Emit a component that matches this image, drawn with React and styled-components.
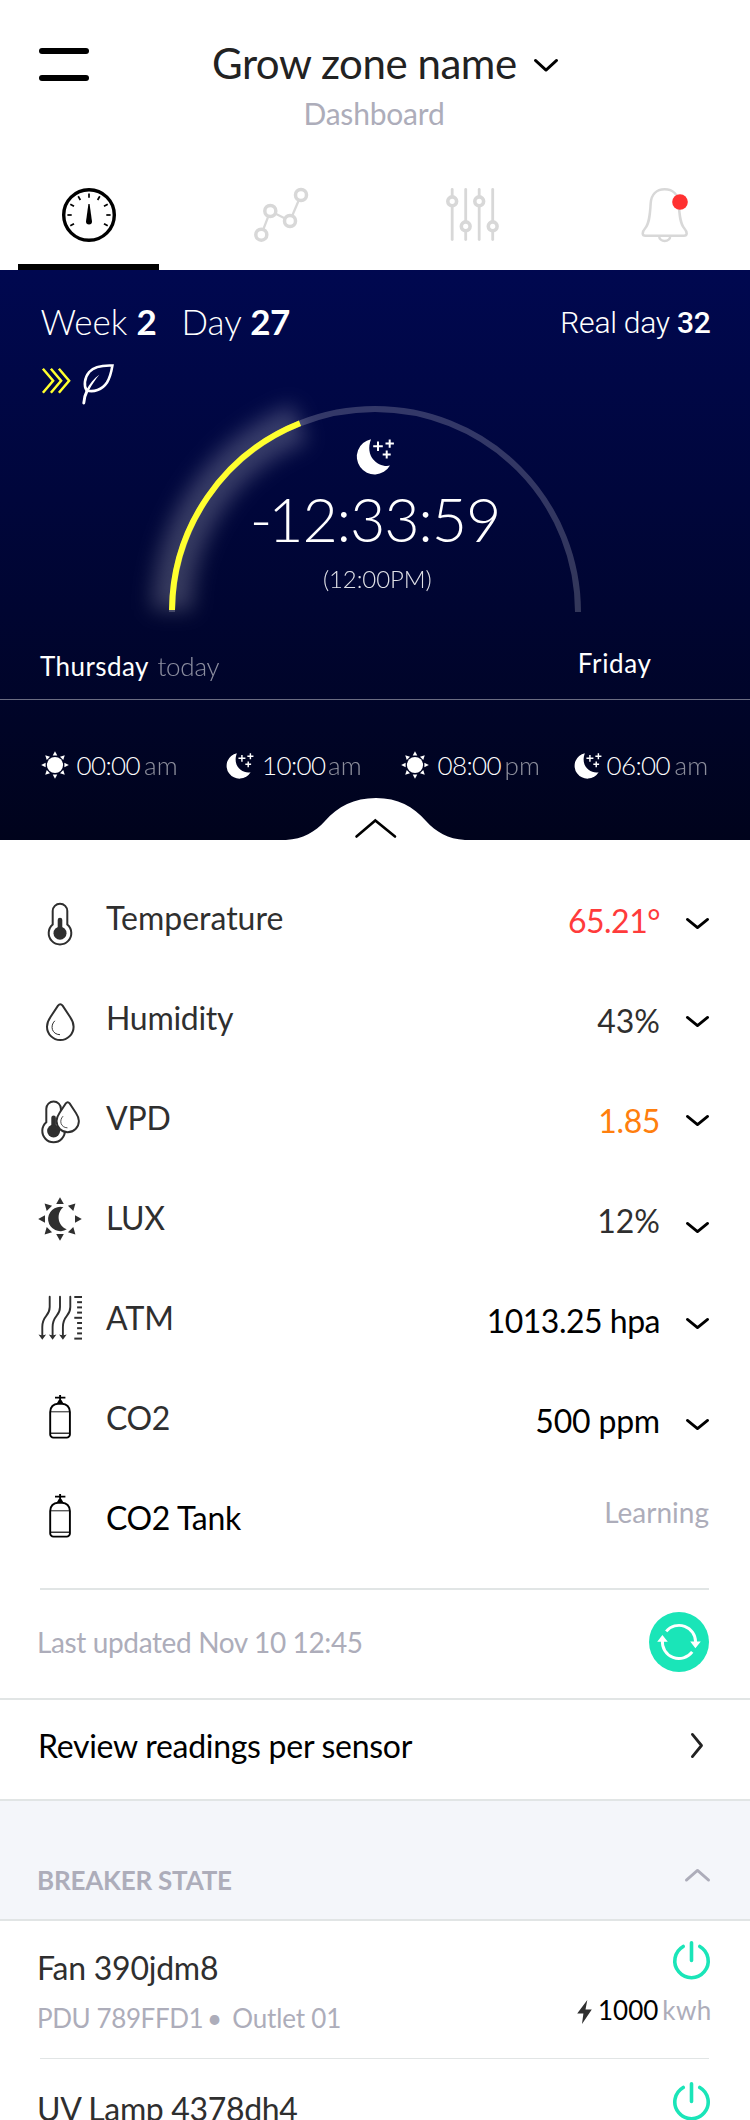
import React from 'react';
import styled, { createGlobalStyle } from 'styled-components';

const GlobalStyle = createGlobalStyle`
  *, *::before, *::after { box-sizing: border-box; }
  body { margin: 0; background: #fff; font-family: Lato, "Liberation Sans", sans-serif; }
  svg { display: block; flex: none; overflow: visible; }
`;

const ink = '#2f2f2f';
const muted = '#adadba';
const teal = '#1ae5b8';
const rule = '#e1e5e5';

/* ---------- Layout ---------- */

const Screen = styled.div`
  width: 750px;
  height: 2120px;
  overflow: hidden;
  background: #fff;
`;

const Header = styled.header`
  display: grid;
  grid-template-columns: 173px 346px;
  height: 188px;
  padding-left: 39px;
`;

const MenuButton = styled.button`
  display: flex;
  flex-direction: column;
  gap: 21px;
  width: 50px;
  margin: 48px 0 0;
  padding: 0;
  border: 0;
  background: none;
  align-self: start;
  &::before, &::after {
    content: '';
    height: 6px;
    border-radius: 3px;
    background: #000;
  }
`;

const Titles = styled.div`
  padding-top: 38px;
`;

const TitleRow = styled.div`
  display: flex;
  align-items: center;
  justify-content: space-between;
  height: 50px;
  svg { margin-top: 4px; }
`;

const Title = styled.h1`
  margin: 0;
  font-size: 42px;
  font-weight: 400;
  line-height: 50px;
  letter-spacing: -0.45px;
  color: #222;
  white-space: nowrap;
`;

const Subtitle = styled.div`
  margin: 7px 22px 0 0;
  text-align: center;
  font-size: 30px;
  line-height: 36px;
  letter-spacing: -0.2px;
  color: ${muted};
`;

const Tabs = styled.nav`
  display: flex;
  gap: 51px;
  height: 82px;
  padding-left: 18px;
`;

const Tab = styled.div`
  display: flex;
  justify-content: center;
  width: 141px;
  border-bottom: 6px solid ${(p) => (p.$active ? '#000' : 'transparent')};
`;

const Hero = styled.section`
  position: relative;
  display: flex;
  flex-direction: column;
  height: 570px;
  padding-top: 30px;
  color: #fff;
  background: linear-gradient(#000850 0%, #00031c 100%);
`;

const HeroTop = styled.div`
  display: flex;
  align-items: flex-start;
  height: 42px;
  padding: 0 39.5px 0 40.5px;
  font-size: 35px;
  line-height: 42px;
  font-weight: 300;
  white-space: pre;
`;

const Counter = styled.span`
  margin-right: ${(p) => p.$gap}px;
  b { font-weight: 700; margin-left: ${(p) => p.$inner}px; letter-spacing: -0.4px; }
`;

const RealDay = styled.span`
  margin-left: auto;
  padding-top: 2px;
  font-family: Roboto, sans-serif;
  font-size: 30px;
  letter-spacing: -0.25px;
  b { font-weight: 500; }
`;

const StageIcons = styled.div`
  display: flex;
  gap: 11px;
  height: 42px;
  margin-top: 21px;
  padding-left: 42px;
  svg:first-child { margin-top: 5px; }
`;

const Dial = styled.div`
  display: grid;
  justify-items: center;
  height: 208px;
  > * { grid-area: 1 / 1; }
`;

const DialContent = styled.div`
  display: flex;
  flex-direction: column;
  align-items: center;
  padding-top: 34px;
  z-index: 1;
`;

const Clock = styled.div`
  margin-top: 8px;
  font-size: 61px;
  line-height: 72px;
  font-weight: 300;
  letter-spacing: -1.2px;
  span { margin-right: -3px; }
`;

const ClockNote = styled.div`
  margin: 9px 0 0 4.5px;
  font-size: 24px;
  line-height: 30px;
  font-weight: 300;
  letter-spacing: -0.1px;
  opacity: 0.88;
`;

const Days = styled.div`
  display: flex;
  height: 53px;
  margin-top: 34px;
  padding-left: 40px;
  border-bottom: 1px solid rgba(255, 255, 255, 0.42);
  font-size: 26px;
  line-height: 32px;
`;

const Today = styled.div`
  width: 537.8px;
  padding-top: 3px;
  letter-spacing: 0.45px;
  span { margin-left: 8.5px; font-weight: 300; letter-spacing: -0.25px; opacity: 0.55; }
`;

const NextDay = styled.div`
  letter-spacing: 0.65px;
`;

const Schedule = styled.div`
  display: grid;
  grid-template-columns: 184.5px 175.2px 173.3px 1fr;
  padding: 49px 0 0 41px;
`;

const Slot = styled.div`
  display: flex;
  gap: ${(p) => p.$gap}px;
  height: 32px;
  font-size: 26px;
  line-height: 32px;
  font-weight: 300;
  svg { margin-top: ${(p) => (p.$moon ? 4 : 2)}px; }
`;

const SlotTime = styled.span`
  letter-spacing: -0.6px;
  span { margin-left: ${(p) => p.$gap}px; letter-spacing: 0; opacity: 0.55; }
`;

const Handle = styled.button`
  position: absolute;
  left: 286px;
  bottom: 0;
  padding: 0;
  border: 0;
  background: none;
`;

const Readings = styled.section`
  padding: 28px 41px 20px 36px;
`;

const Reading = styled.div`
  display: flex;
  height: 100px;
  font-size: 32px;
  line-height: 100px;
`;

const ReadingIcon = styled.span`
  width: 70px;
  padding-top: ${(p) => p.$top}px;
`;

const ReadingName = styled.span`
  flex: 1;
  color: ${(p) => p.$color || ink};
  letter-spacing: ${(p) => p.$track || 0}px;
`;

const ReadingValue = styled.span`
  margin-top: 3px;
  color: ${(p) => p.$color || ink};
  letter-spacing: ${(p) => p.$track || 0}px;
`;

const ReadingStatus = styled.span`
  margin-top: -6px;
  font-size: 28px;
  color: ${muted};
`;

const Expand = styled.span`
  width: 49px;
  padding: ${(p) => p.$top}px 0 0 26px;
`;

const Divider = styled.hr`
  height: ${(p) => p.$size}px;
  margin: 0 41.5px 0 40px;
  border: 0;
  background: ${rule};
`;

const Bar = styled.div`
  display: flex;
  align-items: center;
  justify-content: space-between;
  height: ${(p) => p.$height}px;
  padding: ${(p) => p.$pad};
  border-bottom: 2px solid ${rule};
  background: ${(p) => p.$bg || '#fff'};
`;

const Updated = styled.span`
  font-size: 28px;
  letter-spacing: -0.37px;
  color: ${muted};
`;

const LinkText = styled.span`
  font-size: 32px;
  letter-spacing: -0.28px;
  color: #000;
`;

const SectionTitle = styled.h2`
  margin: 0;
  font-size: 26px;
  font-weight: 700;
  letter-spacing: -0.2px;
  color: ${muted};
`;

const CollapseIcon = styled.span`
  margin-bottom: 9px;
`;

const Breaker = styled.div`
  display: flex;
  justify-content: space-between;
  height: 137px;
  padding: ${(p) => (p.$first ? 20 : 22.5)}px 38px 0 37px;
`;

const BreakerInfo = styled.div`
  padding-top: 7px;
`;

const BreakerName = styled.div`
  font-size: 32px;
  line-height: 40px;
  letter-spacing: ${(p) => p.$track}px;
  color: ${ink};
`;

const BreakerMeta = styled.div`
  margin-top: 14px;
  font-size: 26px;
  line-height: 32px;
  letter-spacing: -0.4px;
  color: ${muted};
  white-space: pre;
  span { margin: 0 -2px 0 -2.5px; }
  em { font-style: normal; letter-spacing: -0.15px; }
`;

const BreakerSide = styled.div`
  display: flex;
  flex-direction: column;
  width: 134.5px;
  > svg { align-self: flex-end; margin-right: 2px; }
`;

const Power = styled.div`
  display: flex;
  margin-top: 15px;
  font-size: 26px;
  line-height: 32px;
  color: #000;
  svg { margin: 6px 6px 0 -0.5px; }
  span { margin-left: 4px; color: ${muted}; letter-spacing: 0.4px; }
`;

/* ---------- Icons ---------- */

const Chevron = ({ w = 23, h = 11.2, color = '#000', up }) => (
  <svg width={w} height={h} fill="none" stroke={color} strokeWidth="2.8" strokeLinecap="round" strokeLinejoin="round">
    <path d={up ? `M1.4 ${h - 1.4}L${w / 2} 1.4L${w - 1.4} ${h - 1.4}` : `M1.4 1.4L${w / 2} ${h - 1.6}L${w - 1.4} 1.4`} />
  </svg>
);

const GaugeIcon = () => (
  <svg width="54" height="54" viewBox="-27 -27 54 54">
    <circle r="25.3" fill="none" stroke="#000" strokeWidth="3.4" />
    {[-120, -90, -60, -30, 0, 30, 60, 90, 120].map((a) => (
      <path key={a} d="M0-21.6V-17.3" stroke="#000" strokeWidth="1.7" transform={`rotate(${a})`} />
    ))}
    <path d="M-.6-11H.6L3 6.6A3 3 0 0 1-3 6.6Z" />
  </svg>
);

const nodes = [[7.3, 46.7], [16.3, 23], [36, 33], [47, 7]];
const NodesIcon = () => (
  <svg width="54" height="54" stroke="#d8d8d8">
    <path d="M7.3 46.7L16.3 23L36 33L47 7" fill="none" strokeWidth="2.3" />
    {nodes.map(([x, y]) => <circle key={x} cx={x} cy={y} r="5.5" fill="#fff" strokeWidth="3.5" />)}
  </svg>
);

const knobs = [[6.2, 13.3], [19.7, 38.3], [33.2, 13.3], [46.7, 38.3]];
const SlidersIcon = () => (
  <svg width="53" height="54" stroke="#d8d8d8">
    {knobs.map(([x, y]) => (
      <g key={x}>
        <path d={`M${x} 1.4V51.6`} strokeWidth="2.8" strokeLinecap="round" />
        <circle cx={x} cy={y} r="4.4" fill="#fff" strokeWidth="3.6" />
      </g>
    ))}
  </svg>
);

const BellIcon = () => (
  <svg width="47" height="54">
    <g fill="none" stroke="#d8d8d8" strokeWidth="2.5">
      <path d="M23.7 1.3C15 1.3 10.4 7 9.7 15C9 28 8 36 4 40.5C.9 44 .8 47.8 4.5 47.8H42.8C46.6 47.8 46.5 44 43.4 40.5C39.4 36 38.4 28 37.7 15C37 7 32.4 1.3 23.7 1.3Z" />
      <path d="M18.2 48.3A5.5 4.6 0 0 0 29.2 48.3" />
    </g>
    <circle cx="39" cy="14" r="7.8" fill="#ff3131" />
  </svg>
);

const FastIcon = () => (
  <svg width="29" height="26" fill="none" stroke="#ffff2e" strokeWidth="2.5">
    {[0, 8, 16].map((x) => <path key={x} d={`M${x + 0.9} .8L${x + 11.1} 12.8L${x + 0.9} 24.8`} />)}
  </svg>
);

const LeafIcon = () => (
  <svg width="32" height="42" fill="none" stroke="#fff" strokeWidth="2.6" strokeLinecap="round">
    <path d="M30.4 2.6C20 2.2 12 3.5 7.2 9C2.2 15 1.7 23 4.6 27.4C11.5 29.5 20 27 25 19.5C28 14.5 29.5 8 30.4 2.6Z" />
    <path d="M1.8 40C2.2 35 3.6 30.5 5.4 27" strokeWidth="2.9" />
    <path d="M4 27.5C7.5 21 12 15.5 17.3 11.8C13.5 16.5 10 21.5 6.6 28Z" fill="#fff" stroke="none" />
  </svg>
);

const MoonIcon = ({ w = 38 }) => (
  <svg width={w} height={(w * 36) / 38} viewBox="0 0 38 36">
    <path d="M15 .2A17.8 17.8 0 1 0 34 26.6C24 29 8 19 15 .2Z" fill="#fff" />
    <path d="M22 2.6V12M17.2 7.3H26.8M33.7.4V8.8M29.5 4.6H37.9M30.7 11.6V19.6M26.7 15.6H34.7" stroke="#fff" strokeWidth="2" />
  </svg>
);

const rays = [0, 45, 90, 135, 180, 225, 270, 315];
const SunIcon = () => (
  <svg width="28" height="28" viewBox="-14 -14 28 28" fill="#fff">
    <circle r="8.1" />
    {rays.map((a) => <path key={a} d="M0-13.8L2.3-9.4H-2.3Z" transform={`rotate(${a})`} />)}
  </svg>
);

const ArcDial = () => (
  <svg width="412" height="208" viewBox="169 405 412 208" fill="none">
    <defs>
      <filter id="glow" filterUnits="userSpaceOnUse" x="80" y="320" width="320" height="380">
        <feGaussianBlur stdDeviation="10" />
      </filter>
    </defs>
    <path d="M172 612A203 203 0 0 1 578 612" stroke="#fff" strokeOpacity=".2" strokeWidth="6" />
    <path d="M172 610A203 203 0 0 1 300 423.2" stroke="#fff" strokeOpacity=".21" strokeWidth="40" filter="url(#glow)" />
    <path d="M172 610A203 203 0 0 1 300 423.2" stroke="#ffff2e" strokeWidth="6" />
  </svg>
);

const HandleShape = () => (
  <svg width="180" height="42">
    <path d="M0 42C17 41 29 34 39 23C52 8.5 68 0 90 0C112 0 127 8.5 140 23C150 34 162 41 179 42Z" fill="#fff" />
    <path d="M70.5 38.5L89.3 22.5L109 38.5" fill="none" stroke="#000" strokeWidth="2.6" strokeLinecap="round" />
  </svg>
);

const Thermo = () => (
  <>
    <path d="M16.7 24.5V11A7.3 7.3 0 0 1 31.3 11V24.5A11.3 11.3 0 1 1 16.7 24.5Z" fill="#fff" stroke={ink} strokeWidth="2" />
    <circle cx="24" cy="33.2" r="6.5" fill={ink} />
    <path d="M24 20V30" stroke={ink} strokeWidth="4.6" strokeLinecap="round" />
  </>
);

const Drop = ({ sw = 2 }) => (
  <>
    <path d="M22 7.6Q24.3 4.8 26.6 7.6L34.1 19C36.5 22.5 37.6 25.5 37.6 28.7A13.3 13.3 0 0 1 11 28.7C11 25.5 12.1 22.5 14.5 19Z" fill="#fff" stroke={ink} strokeWidth={sw} />
    <path d="M18.8 22.8C13.6 28 16 36.5 24 36.7" fill="none" stroke={ink} strokeWidth="1" />
  </>
);

const TemperatureIcon = () => <svg width="48" height="48"><Thermo /></svg>;
const HumidityIcon = () => <svg width="48" height="48"><Drop /></svg>;
const VpdIcon = () => (
  <svg width="48" height="48">
    <g transform="translate(-6.4 -.2)"><Thermo /></g>
    <g transform="translate(11.3 -1) scale(.84)"><Drop sw={2.3} /></g>
  </svg>
);
const LuxIcon = () => (
  <svg width="48" height="48" viewBox="-24 -24 48 48" fill={ink}>
    {rays.map((a) => <path key={a} d="M0-21.8L3.8-15H-3.8Z" transform={`rotate(${a})`} />)}
    <path d="M3.4-11.8A12.2 12.2 0 1 0 6.8 10.3C-3 6.5-3.8-6.5 3.4-11.8Z" />
  </svg>
);
const AtmIcon = () => (
  <svg width="48" height="48" viewBox="-2.5 -2 48 48" stroke={ink} fill="none">
    {[0, 10.3, 20.6].map((x) => (
      <g key={x} transform={`translate(${x} 0)`}>
        <path d="M11.2 .8V11C11.2 21 3.8 19 3.8 31V39" strokeWidth="1.9" strokeLinecap="round" />
        <path d="M0 38.6Q3.8 40 7.6 38.6L3.8 43.8Z" fill={ink} stroke="none" />
      </g>
    ))}
    {[0, 1, 2, 3, 4, 5, 6, 7, 8].map((i) => (
      <path key={i} d={`M${i % 4 ? 38.6 : 35.8} ${1 + i * 5.2}H43.5`} strokeWidth="2" />
    ))}
  </svg>
);
const TankIcon = () => (
  <svg width="48" height="48" stroke="#000" fill="none">
    <path d="M14.2 19C14.2 14 17.5 10.8 22 10.8H26C30.5 10.8 33.9 14 33.9 19V41.4A3.2 3.2 0 0 1 30.7 44.6H17.4A3.2 3.2 0 0 1 14.2 41.4Z" strokeWidth="1.9" />
    <path d="M14.2 18.8H33.9" strokeWidth=".9" />
    <path d="M14.2 40.2H33.9" strokeWidth="1.2" />
    <path d="M19 4.6H29.4M24.1 2V8" strokeWidth="1.9" />
    <path d="M22.8 7H25.4L27.6 10.8H20.6Z" fill="#000" stroke="none" />
  </svg>
);

const RefreshIcon = () => (
  <svg width="60" height="60" fill="none">
    <circle cx="30" cy="30" r="30" fill={teal} />
    <g stroke="#fff" strokeWidth="2.9">
      <path d="M17.2 19.4A16.6 16.6 0 0 1 46.6 30" />
      <path d="M13.4 28.5A16.6 16.6 0 0 0 43.2 39.9" />
    </g>
    <path d="M41.2 29.4H51.8L46.4 36.2ZM8.2 29.8H18.8L13.4 23Z" fill="#fff" />
  </svg>
);

const NextIcon = () => (
  <svg width="12" height="25" fill="none" stroke="#222" strokeWidth="2.8" strokeLinecap="round" strokeLinejoin="round">
    <path d="M1.4 1.4L10.5 12.5L1.4 23.6" />
  </svg>
);

const PowerIcon = () => (
  <svg width="37" height="38" fill="none" stroke={teal} strokeWidth="3.6" strokeLinecap="round">
    <path d="M10.2 5.5A16.7 16.7 0 1 0 26.8 5.5M18.5 1.8V19.4" />
  </svg>
);

const BoltIcon = () => (
  <svg width="15" height="24" fill={ink}>
    <path d="M10.3 0L.2 13.4H6.4L5 24L14.8 9.6H8.5Z" />
  </svg>
);

/* ---------- Data ---------- */

const slots = [
  { time: '00:00', half: 'am', gap: 7.5, halfGap: 4 },
  { time: '10:00', half: 'am', moon: true, gap: 9, halfGap: 2.5 },
  { time: '08:00', half: 'pm', gap: 8.8, halfGap: 3.5 },
  { time: '06:00', half: 'am', moon: true, gap: 5, halfGap: 4.5 },
];

const readings = [
  { name: 'Temperature', value: '65.21°', color: '#ff3b3b', track: -0.5, icon: TemperatureIcon, iconTop: 31.6, expandTop: 50.4 },
  { name: 'Humidity', nameTrack: -0.3, value: '43%', icon: HumidityIcon, iconTop: 30, expandTop: 47.8 },
  { name: 'VPD', nameTrack: -0.2, value: '1.85', color: '#ff7f0e', track: -0.4, icon: VpdIcon, iconTop: 29.5, expandTop: 47 },
  { name: 'LUX', nameTrack: -0.5, value: '12%', icon: LuxIcon, iconTop: 27.3, expandTop: 54 },
  { name: 'ATM', value: '1013.25 hpa', color: '#000', track: -0.5, icon: AtmIcon, iconTop: 26, expandTop: 50.4 },
  { name: 'CO2', nameTrack: -0.4, value: '500 ppm', color: '#000', track: -0.2, icon: TankIcon, iconTop: 25, expandTop: 50.6 },
  { name: 'CO2 Tank', nameColor: '#000', nameTrack: -0.35, status: 'Learning', icon: TankIcon, iconTop: 24 },
];

const breakers = [
  { name: 'Fan 390jdm8', track: -0.25, pdu: 'PDU 789FFD1', outlet: 'Outlet 01', kwh: '1000' },
  { name: 'UV Lamp 4378dh4', track: -0.34 },
];

/* ---------- Screen ---------- */

export default function App() {
  return (
    <>
      <GlobalStyle />
      <Screen>
        <Header>
          <MenuButton aria-label="Menu" />
          <Titles>
            <TitleRow>
              <Title>Grow zone name</Title>
              <Chevron w={24} h={12.7} />
            </TitleRow>
            <Subtitle>Dashboard</Subtitle>
          </Titles>
        </Header>
        <Tabs>
          <Tab $active><GaugeIcon /></Tab>
          <Tab><NodesIcon /></Tab>
          <Tab><SlidersIcon /></Tab>
          <Tab><BellIcon /></Tab>
        </Tabs>

        <Hero>
          <HeroTop>
            <Counter $gap={25} $inner={9}>Week<b>2</b></Counter>
            <Counter $gap={0} $inner={8.5}>Day<b>27</b></Counter>
            <RealDay>Real day <b>32</b></RealDay>
          </HeroTop>
          <StageIcons><FastIcon /><LeafIcon /></StageIcons>
          <Dial>
            <ArcDial />
            <DialContent>
              <MoonIcon />
              <Clock><span>-</span>12:33:59</Clock>
              <ClockNote>(12:00PM)</ClockNote>
            </DialContent>
          </Dial>
          <Days>
            <Today>Thursday<span>today</span></Today>
            <NextDay>Friday</NextDay>
          </Days>
          <Schedule>
            {slots.map((s) => (
              <Slot key={s.time} $gap={s.gap} $moon={s.moon}>
                {s.moon ? <MoonIcon w={27.5} /> : <SunIcon />}
                <SlotTime $gap={s.halfGap}>{s.time}<span>{s.half}</span></SlotTime>
              </Slot>
            ))}
          </Schedule>
          <Handle aria-label="Collapse"><HandleShape /></Handle>
        </Hero>

        <Readings>
          {readings.map(({ icon: Icon, ...r }) => (
            <Reading key={r.name}>
              <ReadingIcon $top={r.iconTop}><Icon /></ReadingIcon>
              <ReadingName $color={r.nameColor} $track={r.nameTrack}>{r.name}</ReadingName>
              {r.status ? (
                <ReadingStatus>{r.status}</ReadingStatus>
              ) : (
                <>
                  <ReadingValue $color={r.color} $track={r.track}>{r.value}</ReadingValue>
                  <Expand $top={r.expandTop}><Chevron /></Expand>
                </>
              )}
            </Reading>
          ))}
        </Readings>
        <Divider $size={2} />
        <Bar $height={110} $pad="0 41px 4px 37px">
          <Updated>Last updated Nov 10 12:45</Updated>
          <RefreshIcon />
        </Bar>
        <Bar $height={101} $pad="0 47px 8px 38px">
          <LinkText>Review readings per sensor</LinkText>
          <NextIcon />
        </Bar>
        <Bar $height={120} $pad="39px 40px 0 37px" $bg="#f4f6fa">
          <SectionTitle>BREAKER STATE</SectionTitle>
          <CollapseIcon><Chevron w={25} h={12.5} color={muted} up /></CollapseIcon>
        </Bar>
        {breakers.map((b, i) => (
          <React.Fragment key={b.name}>
            {i > 0 && <Divider $size={1} />}
            <Breaker $first={i === 0}>
              <BreakerInfo>
                <BreakerName $track={b.track}>{b.name}</BreakerName>
                {b.pdu && <BreakerMeta>{b.pdu}<span> •  </span><em>{b.outlet}</em></BreakerMeta>}
              </BreakerInfo>
              <BreakerSide>
                <PowerIcon />
                {b.kwh && <Power><BoltIcon />{b.kwh}<span>kwh</span></Power>}
              </BreakerSide>
            </Breaker>
          </React.Fragment>
        ))}
      </Screen>
    </>
  );
}
